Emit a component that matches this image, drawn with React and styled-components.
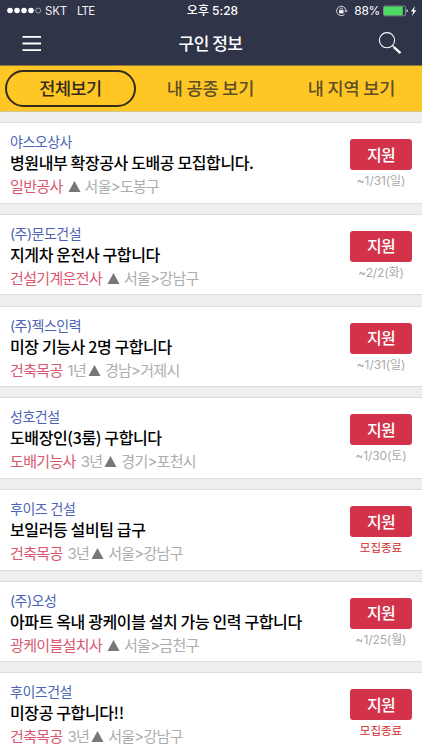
import React from "react";
import styled, { createGlobalStyle } from "styled-components";

const jobs = [
  { company: "야스오상사", title: "병원내부 확장공사 도배공 모집합니다.", type: "일반공사", area: "서울>도봉구", date: "~1/31(일)" },
  { company: "(주)문도건설", title: "지게차 운전사 구합니다", type: "건설기계운전사", area: "서울>강남구", date: "~2/2(화)" },
  { company: "(주)젝스인력", title: "미장 기능사 2명 구합니다", type: "건축목공", career: "1년", area: "경남>거제시", date: "~1/31(일)" },
  { company: "성호건설", title: "도배장인(3룸) 구합니다", type: "도배기능사", career: "3년", area: "경기>포천시", date: "~1/30(토)" },
  { company: "후이즈 건설", title: "보일러등 설비팀 급구", type: "건축목공", career: "3년", area: "서울>강남구", closed: true },
  { company: "(주)오성", title: "아파트 옥내 광케이블 설치 가능 인력 구합니다", type: "광케이블설치사", area: "서울>금천구", date: "~1/25(월)" },
  { company: "후이즈건설", title: "미장공 구합니다!!", type: "건축목공", career: "3년", area: "서울>강남구", closed: true },
];

const tabs = ["전체보기", "내 공종 보기", "내 지역 보기"];

export default function App() {
  return (
    <Screen>
      <GlobalStyle />
      <StatusBar>
        <Carrier>
          <Signal />
          <span>SKT</span>
          <span>LTE</span>
        </Carrier>
        <Clock>오후 5:28</Clock>
        <Power>
          <LockIcon />
          <span>88%</span>
          <BatteryIcon />
        </Power>
      </StatusBar>
      <NavBar>
        <MenuIcon />
        <h1>구인 정보</h1>
        <SearchIcon />
      </NavBar>
      <TabBar>
        {tabs.map((tab, index) => (
          <Tab key={tab} $active={index === 0}>
            {tab}
          </Tab>
        ))}
      </TabBar>
      <JobList>
        {jobs.map((job, index) => (
          <JobCard key={index}>
            <JobInfo>
              <Company>{job.company}</Company>
              <Title>{job.title}</Title>
              <Meta>
                <JobType>{job.type}</JobType>
                {job.career && <Career>{job.career}</Career>}
                <Marker $tight={!!job.career} viewBox="0 0 12 11">
                  <path d="M6 0L12 11H0Z" fill="#777" />
                </Marker>
                <span>{job.area}</span>
              </Meta>
            </JobInfo>
            <Action>
              <ApplyButton>지원</ApplyButton>
              <Deadline $closed={job.closed}>
                {job.closed ? "모집종료" : job.date}
              </Deadline>
            </Action>
          </JobCard>
        ))}
      </JobList>
    </Screen>
  );
}

function Signal() {
  return (
    <svg width="35" height="7" viewBox="0 0 35 7">
      {[3, 10, 17, 24].map((x) => (
        <circle key={x} cx={x} cy="3.5" r="2.8" fill="#fff" />
      ))}
      <circle cx="31.2" cy="3.5" r="2.5" fill="none" stroke="#c4c6cf" strokeWidth="0.7" />
    </svg>
  );
}

function LockIcon() {
  return (
    <svg width="12" height="12" viewBox="0 0 12 12" fill="none" stroke="#e8e9ed">
      <path d="M8.6 9.3A4.7 4.7 0 1 1 9.9 5" strokeWidth="0.9" />
      <path d="M8.2 5.4h3.6L10 7.6z" fill="#e8e9ed" stroke="none" />
      <path d="M4 5.6V4.3a1.3 1.3 0 0 1 2.6 0v1.3" strokeWidth="0.8" />
      <rect x="3.1" y="5.2" width="4.4" height="3.2" fill="#fff" stroke="none" />
    </svg>
  );
}

function BatteryIcon() {
  return (
    <svg width="35" height="12" viewBox="0 0 35 12">
      <rect x="0.5" y="1" width="22" height="9.8" rx="1.5" fill="none" stroke="#a6aab5" strokeWidth="0.7" />
      <rect x="1" y="1.5" width="18.8" height="8.8" rx="0.8" fill="#4cd964" />
      <path d="M23.6 4.3c1.6.3 1.6 2.9 0 3.2z" fill="#fff" />
      <path d="M32 1L27.9 6.6h2.3L29 11l4.4-5.8h-2.5z" fill="#fff" />
    </svg>
  );
}

function MenuIcon() {
  return (
    <svg width="20" height="17" viewBox="0 0 20 17" stroke="#fff" strokeWidth="1.8">
      <path d="M0.5 1.9h18.5M0.5 8.5h18.5M0.5 15.2h18.5" />
    </svg>
  );
}

function SearchIcon() {
  return (
    <svg width="24" height="24" viewBox="0 0 24 24" fill="none" stroke="#fff">
      <circle cx="9" cy="9.2" r="7.6" strokeWidth="1.1" />
      <path d="M14.5 14.7l2 2" strokeWidth="1.2" />
      <path d="M15.8 16.1l6.7 6" strokeWidth="2.4" />
    </svg>
  );
}

const GlobalStyle = createGlobalStyle`
  * {
    box-sizing: border-box;
  }
  body {
    margin: 0;
    overflow: hidden;
    background: #eee;
    font-family: "Noto Sans CJK KR", sans-serif;
  }
`;

const Screen = styled.div`
  display: flex;
  flex-direction: column;
  width: 422px;
  height: 750px;
  overflow: hidden;
  background: #eee;
`;

const StatusBar = styled.div`
  flex: none;
  display: grid;
  grid-template-columns: 1fr auto 1fr;
  align-items: center;
  height: 21px;
  padding: 0 4px 0 7px;
  background: #2f3449;
  color: #fff;
  font-size: 12px;
  line-height: 20px;
`;

const Carrier = styled.div`
  display: flex;
  align-items: center;
  font-family: Inter, sans-serif;
  font-size: 11.5px;
  letter-spacing: -0.2px;
  color: #f0f0f3;

  span {
    margin-left: 3px;
  }
  span + span {
    margin-left: 10px;
    letter-spacing: -0.8px;
  }
`;

const Clock = styled.div`
  font-family: Inter, "Noto Sans CJK KR", sans-serif;
  font-weight: 500;
`;

const Power = styled.div`
  display: flex;
  align-items: center;
  justify-content: flex-end;
  font-family: Inter, sans-serif;

  span {
    margin: 0 3px 0 6px;
    letter-spacing: -0.3px;
  }
`;

const NavBar = styled.header`
  flex: none;
  display: flex;
  align-items: center;
  justify-content: space-between;
  height: 44px;
  padding: 0 20px 0 22px;
  background: #2f3449;

  h1 {
    margin: -1px 0 0 1px;
    color: #fff;
    font-size: 17px;
    font-weight: 500;
    line-height: 24px;
    letter-spacing: -0.5px;
  }
`;

const TabBar = styled.nav`
  flex: none;
  display: grid;
  grid-template-columns: 131px 149px 133px;
  align-items: center;
  height: 47px;
  padding: 0 4px 0 5px;
  border-top: 1px solid #8c763a;
  border-bottom: 1px solid #d9c68c;
  background: #ffc726;
`;

const Tab = styled.div`
  display: flex;
  align-items: center;
  justify-content: center;
  height: 37px;
  padding-bottom: 2px;
  border: 2px solid ${(props) => (props.$active ? "#332c1a" : "transparent")};
  border-radius: 19px;
  color: ${(props) => (props.$active ? "#332c1a" : "#5e4e25")};
  font-size: 17.5px;
  font-weight: 500;
  letter-spacing: ${(props) => (props.$active ? -0.5 : -0.15)}px;
`;

const JobList = styled.main`
  display: flex;
  flex-direction: column;
  gap: 10.2px;
  padding-top: 10.3px;
`;

const JobCard = styled.article`
  flex: none;
  display: flex;
  justify-content: space-between;
  height: 81.5px;
  padding: 9px 10px 0;
  border-top: 1px solid #dcdcdc;
  border-bottom: 1px solid #dcdcdc;
  background: #fff;
`;

const JobInfo = styled.div`
  white-space: nowrap;
`;

const Company = styled.div`
  color: #4b63b5;
  font-family: Inter, "Noto Sans CJK KR", sans-serif;
  font-size: 14px;
  line-height: 20px;
  letter-spacing: -0.5px;
`;

const Title = styled.div`
  color: #000;
  font-size: 16px;
  font-weight: 500;
  line-height: 20px;
  letter-spacing: -0.38px;
`;

const Meta = styled.div`
  display: flex;
  align-items: center;
  color: #adadad;
  font-family: Inter, "Noto Sans CJK KR", sans-serif;
  font-size: 15px;
  line-height: 29px;
  letter-spacing: -0.75px;
`;

const JobType = styled.span`
  color: #d9586f;
  letter-spacing: -0.65px;
`;

const Career = styled.span`
  margin-left: 5px;
`;

const Marker = styled.svg`
  width: 13px;
  height: 11px;
  margin: 0 4px 0 ${(props) => (props.$tight ? 2 : 5)}px;
`;

const Action = styled.div`
  width: 62px;
  padding-top: 7px;
  text-align: center;
`;

const ApplyButton = styled.button`
  display: block;
  width: 62px;
  height: 31px;
  padding: 0 0 1px;
  border: 0;
  border-radius: 3px;
  background: #d2334b;
  color: #fff;
  font-family: inherit;
  font-size: 16px;
  font-weight: 500;
  line-height: 29px;
  letter-spacing: -0.8px;
`;

const Deadline = styled.div`
  margin-top: 1px;
  color: ${(props) => (props.$closed ? "#d22b2b" : "#aaa")};
  font-family: Inter, "Noto Sans CJK KR", sans-serif;
  font-size: ${(props) => (props.$closed ? 11.5 : 12)}px;
  line-height: 20px;
  letter-spacing: ${(props) => (props.$closed ? 0 : -0.1)}px;
  white-space: nowrap;
`;
